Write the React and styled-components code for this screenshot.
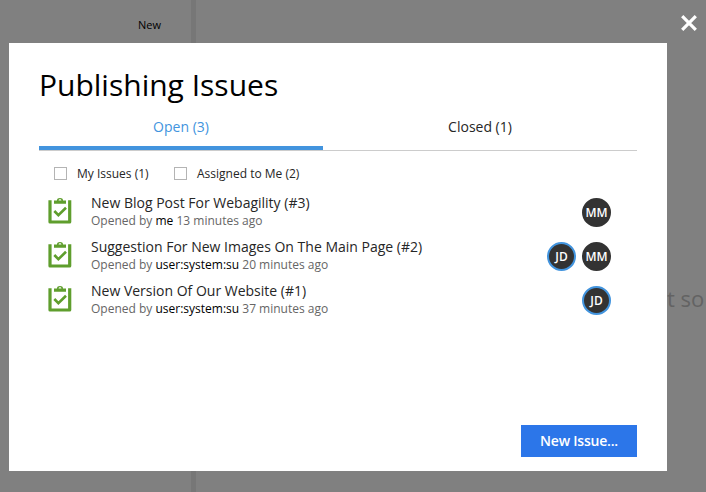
import React from 'react';
import styled, { createGlobalStyle } from 'styled-components';

const GlobalStyle = createGlobalStyle`
  * { box-sizing: border-box; }
  html, body { margin: 0; padding: 0; overflow: hidden; }
  body { font-family: 'Open Sans', 'Noto Sans', sans-serif; color: #000; }
`;

const Page = styled.div`
  position: relative;
  display: flex;
  width: 706px;
  height: 492px;
  overflow: hidden;
  background: #808080;
`;

const Sidebar = styled.aside`
  width: 196px;
  flex: none;
  padding: 17px 30px 0 0;
  border-right: 5px solid #777;
  font-size: 11px;
  line-height: 16px;
  text-align: right;
`;

const Preview = styled.main`
  flex: 1;
  display: flex;
  min-width: 0;
  padding: 284px 0 0 471px;
  overflow: hidden;
  white-space: nowrap;
  font-size: 22px;
  line-height: 28px;
  color: #636363;
`;

const CloseButton = styled.button`
  position: absolute;
  top: 15px;
  right: 9px;
  width: 16px;
  height: 16px;
  padding: 0;
  border: 0;
  background: none;

  svg { display: block; }
`;

const Dialog = styled.section`
  position: absolute;
  top: 43px;
  left: 9px;
  display: flex;
  flex-direction: column;
  width: 658px;
  height: 428px;
  padding: 21px 30px 14px;
  background: #fff;
`;

const Title = styled.h1`
  margin: 0;
  font-size: 30px;
  line-height: 42px;
  font-weight: 400;
  white-space: nowrap;
`;

const Tabs = styled.nav`
  display: flex;
  height: 45px;
  border-bottom: 1px solid #ccc;
`;

const Tab = styled.div`
  width: ${(p) => (p.$active ? 284 : 314)}px;
  padding-top: 11px;
  border-bottom: 4px solid ${(p) => (p.$active ? '#4294de' : 'transparent')};
  color: ${(p) => (p.$active ? '#4294de' : '#262626')};
  font-size: 14px;
  line-height: 20px;
  text-align: center;
`;

const Filters = styled.div`
  display: flex;
  padding: 14px 0 0 15px;
`;

const Filter = styled.label`
  display: flex;
  align-items: center;
  width: 120px;
  height: 16px;
  gap: 10px;
  font-size: 12px;
  color: #262626;
  white-space: nowrap;
`;

const Box = styled.span`
  width: 13px;
  height: 13px;
  flex: none;
  border: 1px solid #b4b4b4;
`;

const List = styled.ul`
  margin: 12px 0 0;
  padding: 0 26px 0 9px;
  list-style: none;
`;

const Issue = styled.li`
  display: flex;
  height: 44px;

  > svg { flex: none; margin-top: 5px; }
`;

const Details = styled.div`
  flex: 1;
  padding-left: 19px;
  white-space: nowrap;
`;

const IssueName = styled.div`
  font-size: 14px;
  line-height: 20px;
  color: #262626;
`;

const Meta = styled.div`
  font-size: 12px;
  line-height: 16px;
  color: #666;

  b { font-weight: 400; color: #000; }
`;

const Assignees = styled.div`
  display: flex;
  gap: 6px;
  padding-top: 5px;
`;

const Avatar = styled.span`
  display: flex;
  align-items: center;
  justify-content: center;
  width: 29px;
  height: 29px;
  border-radius: 50%;
  border: 2px solid ${(p) => (p.$highlighted ? '#4294de' : '#333')};
  background: #333;
  color: #fff;
  font-size: 12px;
  font-weight: 600;
`;

const Footer = styled.footer`
  display: flex;
  justify-content: flex-end;
  margin-top: auto;
`;

const PrimaryButton = styled.button`
  width: 116px;
  height: 32px;
  padding: 0;
  border: 0;
  background: #2c76e9;
  color: #fff;
  font: 600 14px/32px 'Open Sans', sans-serif;
  letter-spacing: -0.22px;
`;

const ClipboardIcon = () => (
  <svg width="24" height="26" viewBox="0 0 24 26">
    <path
      d="M2 2.2V24H21.7V2.2"
      fill="none"
      stroke="#5f9e2d"
      strokeWidth="3.2"
      strokeLinejoin="round"
    />
    <path
      fill="#5f9e2d"
      fillRule="evenodd"
      d="M6 2.4H9C9 .7 10.2 0 12 0S15 .7 15 2.4H18V5.8H6ZM10.6 2.6H13.4C13.4 1.7 12.8 1.3 12 1.3S10.6 1.7 10.6 2.6Z"
    />
    <path d="M6.3 13L10.4 17.2L18 9.8" fill="none" stroke="#5f9e2d" strokeWidth="2.6" />
  </svg>
);

const issues = [
  { id: 3, name: 'New Blog Post For Webagility', by: 'me', ago: 13, people: ['MM'] },
  { id: 2, name: 'Suggestion For New Images On The Main Page', by: 'user:system:su', ago: 20, people: ['JD', 'MM'] },
  { id: 1, name: 'New Version Of Our Website', by: 'user:system:su', ago: 37, people: ['JD'] },
];

export default function App() {
  return (
    <>
      <GlobalStyle />
      <Page>
        <Sidebar>New</Sidebar>
        <Preview>t so</Preview>
        <CloseButton aria-label="Close">
          <svg width="16" height="16" viewBox="0 0 16 16">
            <path d="M1.2 1.2L14.8 14.8M14.8 1.2L1.2 14.8" stroke="#fff" strokeWidth="3.2" />
          </svg>
        </CloseButton>
        <Dialog>
          <Title>Publishing Issues</Title>
          <Tabs>
            <Tab $active>Open (3)</Tab>
            <Tab>Closed (1)</Tab>
          </Tabs>
          <Filters>
            <Filter><Box />My Issues (1)</Filter>
            <Filter><Box />Assigned to Me (2)</Filter>
          </Filters>
          <List>
            {issues.map((issue) => (
              <Issue key={issue.id}>
                <ClipboardIcon />
                <Details>
                  <IssueName>{`${issue.name} (#${issue.id})`}</IssueName>
                  <Meta>Opened by <b>{issue.by}</b> {issue.ago} minutes ago</Meta>
                </Details>
                <Assignees>
                  {issue.people.map((person) => (
                    <Avatar key={person} $highlighted={person === 'JD'}>{person}</Avatar>
                  ))}
                </Assignees>
              </Issue>
            ))}
          </List>
          <Footer><PrimaryButton>New Issue...</PrimaryButton></Footer>
        </Dialog>
      </Page>
    </>
  );
}
